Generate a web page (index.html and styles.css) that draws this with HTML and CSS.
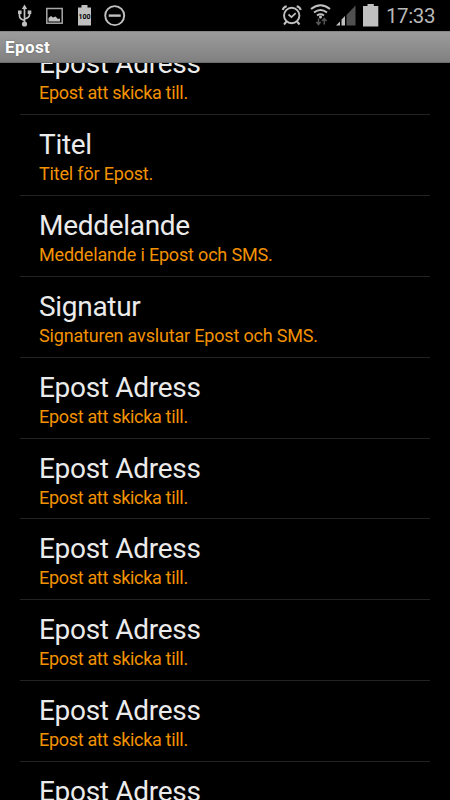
FILE: index.html
```html
<!DOCTYPE html>
<html lang="sv">
<head>
  <meta charset="UTF-8">
  <meta name="viewport" content="width=device-width, initial-scale=1.0">
  <title>Epost</title>
  <link rel="stylesheet" href="styles.css">
</head>
<body>
  <div class="status-bar">
    <!-- USB, picture, battery level, do not disturb -->
    <svg class="status-icons" width="140" height="31" viewBox="0 0 140 31" fill="none" stroke="#c0c0c0">
      <path d="M24.5 8v15M19.500 12v4q0 3 5 4.500M29.500 12v3q0 2.500-5 4" stroke-width="1.700"/>
      <path d="M24.5 4.500l-2.700 4.500h5.400zM18 10.500h3.600v3.600H18zM27.700 10.500h3.600v3.600h-3.600z" fill="#c0c0c0" stroke="none"/>
      <circle cx="24.500" cy="24" r="2.600" fill="#c0c0c0" stroke="none"/>
      <rect x="46.800" y="8.500" width="15.400" height="14.700" stroke="#a8a8a8" stroke-width="1.500"/>
      <path d="M48.500 21.500v-3.500l2.500-2 2 1.500 2.500-1 2.500 2.500 2-.5v3z" fill="#c0c0c0" stroke="none"/>
      <path d="M78 7.500h3.500V5h6v2.500H91V25.500H78z" fill="#c0c0c0" stroke="none"/>
      <text class="battery-level" x="84.500" y="18.500" text-anchor="middle">100</text>
      <circle cx="114.700" cy="15.600" r="9.500" stroke-width="1.900"/>
      <path d="M108.700 15.600h12" stroke-width="2.400"/>
    </svg>
    <!-- Alarm, wifi, signal, battery -->
    <svg class="status-icons" width="100" height="31" viewBox="280 0 100 31" fill="none" stroke="#c0c0c0">
      <circle cx="291.700" cy="15.500" r="7.700" stroke-width="1.900"/>
      <path d="M282.700 10q.8-3 4-3.700M300.700 10q-.8-3-4-3.700M286.500 21.500l-2.500 3M297 21.500l2.500 3" stroke-width="2"/>
      <path d="M288.500 14.500l3 2.700 4.200-4" stroke-width="1.700"/>
      <path d="M311 9q9.500-7.500 19 0M314 12.500q6.500-5 13 0M317 15.500q3.500-2.500 7 0" stroke-width="2"/>
      <circle cx="320.500" cy="17" r="1.500" fill="#c0c0c0" stroke="none"/>
      <path d="M318.500 18.500v6M316.300 22l2.200 2.500 2.200-2.500M324.300 24.500v-6M322 21l2.300-2.500 2.300 2.500" stroke="#555" stroke-width="1.500"/>
      <path d="M336 25.500l4-4v4zM341.500 25.500v-6l3.500-3.500v9.500z" fill="#c0c0c0" stroke="none"/>
      <path d="M346.500 25.500V15l9-9.500v20z" fill="#505050" stroke="none"/>
      <path d="M363 6h4.500V4h6.300v2h4.500v20.500H363z" fill="#c0c0c0" stroke="none"/>
    </svg>
    <span class="clock">17:33</span>
  </div>

  <header>
    <h1>Epost</h1>
  </header>

  <div class="list">
    <div class="items">
      <div class="item address">
        <h2>Epost Adress</h2>
        <p>Epost att skicka till.</p>
      </div>
      <div class="item">
        <h2>Titel</h2>
        <p>Titel för Epost.</p>
      </div>
      <div class="item">
        <h2>Meddelande</h2>
        <p>Meddelande i Epost och SMS.</p>
      </div>
      <div class="item">
        <h2>Signatur</h2>
        <p>Signaturen avslutar Epost och SMS.</p>
      </div>
      <div class="item address">
        <h2>Epost Adress</h2>
        <p>Epost att skicka till.</p>
      </div>
      <div class="item address">
        <h2>Epost Adress</h2>
        <p>Epost att skicka till.</p>
      </div>
      <div class="item address">
        <h2>Epost Adress</h2>
        <p>Epost att skicka till.</p>
      </div>
      <div class="item address">
        <h2>Epost Adress</h2>
        <p>Epost att skicka till.</p>
      </div>
      <div class="item address">
        <h2>Epost Adress</h2>
        <p>Epost att skicka till.</p>
      </div>
      <div class="item address">
        <h2>Epost Adress</h2>
      </div>
    </div>
  </div>
</body>
</html>
```

FILE: styles.css
```css
* {
  box-sizing: border-box;
  margin: 0;
  padding: 0;
}

body {
  display: flex;
  flex-direction: column;
  height: 100vh;
  overflow: hidden;
  background: #000;
  color: #ebebeb;
  font-family: Roboto, sans-serif;
}

.status-bar {
  display: flex;
  flex: none;
  height: 31px;
  padding-right: 14px;
}

.status-icons {
  flex: none;
}

.status-icons + .status-icons {
  margin-left: auto;
}

.battery-level {
  fill: #000;
  stroke: none;
  font-size: 7px;
  font-weight: 700;
}

.clock {
  width: 50px;
  margin-left: 6px;
  color: #b8b8b8;
  font-size: 20.5px;
  letter-spacing: -0.4px;
  line-height: 32px;
  white-space: nowrap;
}

header {
  flex: none;
  height: 32px;
  padding-left: 5px;
  background: linear-gradient(#9c9c9c, #808080);
  border-top: 1px solid #888;
  border-bottom: 1px solid #6c6c6c;
}

h1 {
  color: #fff;
  font-size: 17px;
  font-weight: 700;
  letter-spacing: 0.4px;
  line-height: 31px;
  text-shadow: 0 0 2px #666;
}

.list {
  flex: 1;
  min-height: 0;
  padding: 0 20px;
  overflow: hidden;
}

/* scrolled part way past the first item */
.items {
  margin-top: -28.7px;
}

.item {
  height: 80.86px;
  padding: 12px 19px 0;
  border-bottom: 1px solid #222;
}

h2 {
  font-size: 28px;
  font-weight: 400;
  letter-spacing: -0.3px;
  line-height: 36px;
}

p {
  color: #f39200;
  font-size: 18px;
  letter-spacing: -0.18px;
  line-height: 21px;
}

.address p {
  letter-spacing: -0.31px;
}
```
